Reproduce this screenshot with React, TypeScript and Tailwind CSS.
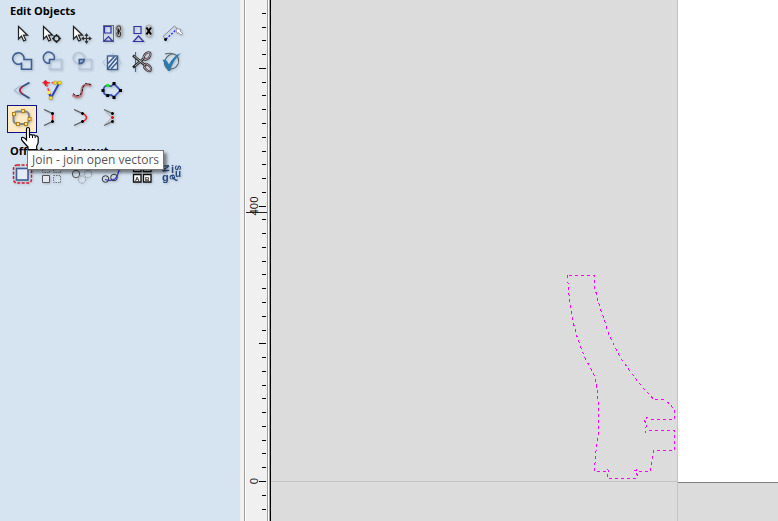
import type { ReactNode } from 'react';
import clsx from 'clsx';

type Tool = { label: string; icon: ReactNode; active?: boolean; newRow?: boolean };

const NAVY = '#3f5f93';
const arrow = 'v12.5l3-3 2.2 5 2-1-2.2-4.8h4z';

const CursorArrow = ({ x }: { x: number }) => (
  <path d={`M${x} 5.5${arrow}`} fill="#fff" stroke="#222" strokeWidth="1.2" />
);

// small square nodes used by the vector icons
const Nodes = ({ at, fill, size = 3 }: { at: number[][]; fill: string; size?: number }) => (
  <>
    {at.map(([x, y]) => (
      <rect key={`${x}-${y}`} x={x - size / 2} y={y - size / 2} width={size} height={size} fill={fill} />
    ))}
  </>
);

const Plus = ({ x, y, color = '#000' }: { x: number; y: number; color?: string }) => (
  <path d={`M${x - 1.5} ${y}h3M${x} ${y - 1.5}v3`} stroke={color} strokeWidth="1.5" />
);

const editTools: Tool[] = [
  { label: 'Select', icon: <CursorArrow x={11.5} /> },
  {
    label: 'Node edit',
    icon: (
      <>
        <CursorArrow x={6.5} />
        <circle cx="19.5" cy="17.5" r="2.7" stroke="#222" strokeWidth="1.5" />
        <path d="M19.5 13v2M19.5 20v2M15 17.5h2M22 17.5h2" stroke="#222" strokeWidth="1.5" />
      </>
    ),
  },
  {
    label: 'Transform',
    icon: (
      <>
        <CursorArrow x={6.5} />
        <path
          d="M19.5 13.5v8M15.5 17.5h8M18 15l1.5-2 1.5 2M18 20l1.5 2 1.5-2M17 16l-2 1.5 2 1.5M22 16l2 1.5-2 1.5"
          stroke="#333"
          strokeWidth="1.1"
        />
      </>
    ),
  },
  {
    label: 'Group',
    icon: (
      <>
        <path d="M6.5 4.5h10v16h-10z" stroke="#000" strokeDasharray="1 1" />
        <path d="M7.5 5.5h6.5v6.5h-6.5zM7 20h8.5l-4-4.5z" stroke="#3232a5" strokeWidth="1.2" />
        <rect x="18.5" y="4" width="6.5" height="12.5" rx="3" fill="#bbb" stroke="#aaa" />
        <rect x="20" y="5" width="3.5" height="5" rx="1.5" stroke="#333" />
        <rect x="20" y="10.5" width="3.5" height="5" rx="1.5" stroke="#333" />
        <path d="M21.7 7.5v6" stroke="#000" />
      </>
    ),
  },
  {
    label: 'Ungroup',
    icon: (
      <>
        <path d="M7 5.5h7v7h-7zM6.5 20.5h10l-5-5.5z" stroke="#3232a5" strokeWidth="1.2" />
        <rect x="18.5" y="4" width="6.5" height="12" rx="3" fill="#c8c8c8" stroke="#aaa" />
        <path d="M19.5 6.5l4.5 7M24 6.5l-4.5 7" stroke="#000" strokeWidth="2" />
      </>
    ),
  },
  {
    label: 'Measure',
    icon: (
      <>
        <path d="M6 15.5L17.5 5M6 15.5l3 3M17.5 5l3 3" stroke="#888" />
        <path d="M9 18L20 8" stroke="#22f" strokeWidth="1.3" strokeDasharray="2 1.5" />
        <Plus x={8.5} y={18.5} />
        <path d="M19 7.5l5 1-1 1.5 2.5 2.5-1.5 1.5-2.5-2.5-1.5 1z" fill="#fff" stroke="#888" strokeWidth=".8" />
      </>
    ),
  },
  {
    label: 'Weld vectors',
    icon: <path d="M14.5 14.3A5.7 5.7 0 1 1 17 10.5h7.5v9.7h-10z" stroke={NAVY} strokeWidth="1.6" />,
  },
  {
    label: 'Subtract vectors',
    icon: (
      <>
        <path d="M12.5 10.5h12v9.7h-12z" stroke="#b4c4da" strokeWidth="1.5" />
        <path d="M12.5 14.3A5.6 5.6 0 1 1 17.2 10.5h-4.7z" stroke={NAVY} strokeWidth="1.5" />
      </>
    ),
  },
  {
    label: 'Intersect vectors',
    icon: (
      <>
        <path d="M12 10.5h12.5v9.7H12z" stroke="#b4c4da" strokeWidth="1.3" />
        <circle cx="11.7" cy="9" r="5.6" stroke="#b4c4da" strokeWidth="1.3" />
        <path d="M12.3 10.5h5q-.8 4-5 4.3z" stroke={NAVY} strokeWidth="1.5" fill="#9db2d0" />
      </>
    ),
  },
  {
    label: 'Trim overlaps',
    icon: (
      <>
        <path d="M5.5 13.5l9.5-9.5 9.5 9.5-9.5 9.5z" stroke="#a9bdd8" strokeDasharray="3 1.5" />
        <rect x="10.5" y="7" width="10" height="13.5" fill="#e5edf7" stroke={NAVY} strokeWidth="1.4" />
        <path d="M11 14.5L17.5 7.5M11 19.5l9-11M14 20l6.5-7" stroke={NAVY} strokeWidth="1.7" />
      </>
    ),
  },
  {
    label: 'Interactive trim',
    icon: (
      <>
        <path d="M8.5 3v20" stroke="#3c6b9c" strokeWidth="1.1" />
        <path d="M6 6.5L19 17M6 18.5L18 8.5" stroke="#222" strokeWidth="2.6" />
        <path d="M7 7l11 9M8 17l9-8" stroke="#ddd" strokeWidth=".8" />
        <ellipse cx="20" cy="7" rx="4.3" ry="2.6" transform="rotate(-50 20 7)" stroke="#332b2f" strokeWidth="2.2" />
        <ellipse cx="20.5" cy="18.5" rx="4.3" ry="2.6" transform="rotate(45 20.5 18.5)" stroke="#332b2f" strokeWidth="2.2" />
        <ellipse cx="20" cy="7" rx="4.3" ry="2.6" transform="rotate(-50 20 7)" stroke="#d6b6bf" strokeWidth=".8" />
        <ellipse cx="20.5" cy="18.5" rx="4.3" ry="2.6" transform="rotate(45 20.5 18.5)" stroke="#d6b6bf" strokeWidth=".8" />
      </>
    ),
  },
  {
    label: 'Vector validator',
    icon: (
      <>
        <path d="M8 5q6-2 11 1 4 4 2 9-3 6-10 5-5-3-3-9 3-6 8-6" stroke="#566" strokeWidth="1.1" />
        <path d="M5.5 10.5l4 1 2.5 4Q16 7 24 4q-8 7-11 18h-2z" fill="#2b79ad" />
      </>
    ),
  },
  {
    label: 'Fillet',
    icon: (
      <>
        <path d="M13.5 8.5L7 13.3l6.5 4.7" stroke="#93add0" />
        <path d="M22.5 5.5L15 9.8q-4.5 3.5 0 7l7.5 4.5" stroke="#34507f" strokeWidth="1.7" />
        <path d="M15.5 9.5q-5 3.8 0 7.5" stroke="#b52b43" strokeWidth="1.6" />
      </>
    ),
  },
  {
    label: 'Extend',
    icon: (
      <>
        <path d="M9 5.7h12M9 6l5 14" stroke="#f44" strokeWidth="1.6" strokeDasharray="4 1.5" />
        <path d="M22 6.5L14 21l-2-5" stroke="#2845ad" strokeWidth="2" />
        <Nodes at={[[8.5, 5.7]]} fill="#e51f2b" size={3.5} />
        <path d="M8.5 3v6M5.5 5.7h6" stroke="#e51f2b" strokeWidth="1.2" />
        <Nodes at={[[18, 5.7], [22.5, 5.7], [11.7, 15.5], [13.7, 21]]} fill="#ffed27" />
        <path d="M16.8 4.2h2.5v3h-2.5zM21 4.2h3v3h-3zM12.2 19.5h3v3h-3z" stroke="#a98d27" strokeWidth=".6" />
      </>
    ),
  },
  {
    label: 'Fit curves',
    icon: (
      <>
        <path d="M5.7 17.5q2 3 6 2.5 3-1 3-5.5 0-6 4-6.5 3-1 5.5 1" stroke="#c77b83" strokeWidth="2.6" />
        <path d="M6 16.5l3 2.5 4-1 2-3 1-5 2.5-3.5 5.5 1" stroke="#171717" strokeDasharray="3 1" />
      </>
    ),
  },
  {
    label: 'Curve contour',
    icon: (
      <>
        <path d="M6.5 13.5q0-5 4.5-5l3 .8 3-2.5 6.5 6.5L17 20l-3-2-3.5 .5q-4-1-4-5z" stroke="#3651b5" strokeWidth="1.7" />
        <Nodes at={[[17, 6.5], [23.5, 13.5], [17, 20.5], [10.7, 18.5], [6, 13.5]]} fill="#000" />
        <Nodes at={[[10.7, 8.5]]} fill="#25e421" />
      </>
    ),
  },
  {
    label: 'Join',
    active: true,
    newRow: true,
    icon: (
      <>
        <rect x="6.5" y="6.5" width="15.5" height="12.5" rx="4" stroke="#7c8791" strokeWidth="2" />
        {[[7, 9], [16, 6], [22.5, 14], [19, 19], [11, 19]].map(([x, y]) => (
          <rect key={x} x={x - 1.5} y={y - 1.5} width="3" height="3" fill="#ffe27a" stroke="#b68120" />
        ))}
      </>
    ),
  },
  {
    label: 'Close with line',
    icon: (
      <>
        <path d="M7 4.5l8.5 4M15.5 16.5l-8.5 4" stroke="#555" strokeWidth="1.2" />
        <path d="M15.5 9v7" stroke="#f01a1a" strokeWidth="1.4" />
        <Plus x={15.5} y={8.5} />
        <Plus x={15.5} y={16.5} />
      </>
    ),
  },
  {
    label: 'Close with curve',
    icon: (
      <>
        <path d="M7 4.5l8.5 4M15.5 16.5l-8.5 4" stroke="#555" strokeWidth="1.2" />
        <path d="M16 8.5q7 4 0 8" stroke="#f01a1a" strokeWidth="1.4" />
        <Plus x={15.5} y={8.5} />
        <Plus x={15.5} y={16.5} />
      </>
    ),
  },
  {
    label: 'Close by moving ends',
    icon: (
      <>
        <path d="M8 5.5l7.5 7-7.5 7" stroke="#b9bcc0" strokeWidth="1.2" />
        <path d="M7 4.5l8.5 4M15.5 16.5l-8.5 4" stroke="#666" strokeWidth="1.2" />
        <Plus x={15.5} y={8.5} />
        <Plus x={15.5} y={12.5} color="#d8121c" />
        <Plus x={15.5} y={16.5} />
      </>
    ),
  },
];

const layoutTools: Tool[] = [
  {
    label: 'Offset',
    icon: (
      <>
        <rect x="6.5" y="4" width="18" height="18" rx="3.5" stroke="#d01c2b" strokeWidth="1.5" strokeDasharray="3 1.5" />
        <rect x="9.5" y="7.5" width="11.5" height="11.5" fill="#e3ebf4" stroke={NAVY} strokeWidth="1.6" />
      </>
    ),
  },
  {
    label: 'Array copy',
    icon: (
      <>
        <path d="M5.5 4.5h7v7h-7zM16.5 4.5h7v7h-7zM16.5 14.5h7v7h-7z" stroke="#777" strokeDasharray="1.5 1" />
        <path d="M5.5 14.5h7v7h-7z" stroke="#555" fill="#e5e9ef" />
      </>
    ),
  },
  {
    label: 'Circular copy',
    icon: (
      <>
        <circle cx="9" cy="13" r="3.7" stroke="#555" />
        <circle cx="15" cy="18.5" r="3.7" stroke="#888" strokeDasharray="1.5 1" />
        <circle cx="21" cy="13" r="3.7" stroke="#888" strokeDasharray="1.5 1" />
      </>
    ),
  },
  {
    label: 'Copy along vectors',
    icon: (
      <>
        <path d="M8 18.5q10 3 12.5-4.5 1-4 3.5-9" stroke="#3d3de0" strokeWidth="1.3" />
        <circle cx="8.5" cy="18" r="3.3" stroke="#333" />
        <circle cx="17" cy="16.5" r="3.3" stroke="#333" />
      </>
    ),
  },
  {
    label: 'Plate layout',
    icon: (
      <>
        <path
          d="M6.5 3.5h7.5v7h-7.5zM16.5 3.5h7.5v7h-7.5zM6.5 13.5h7.5v7.5h-7.5zM16.5 13.5h7.5v7.5h-7.5z"
          fill="#fff"
          stroke="#111"
          strokeWidth="1.3"
        />
        <g className="font-['Liberation_Sans'] text-[6px] font-bold" fill="#111" textAnchor="middle">
          <text x="10.25" y="19.5">A</text>
          <text x="20.25" y="19.5">B</text>
        </g>
      </>
    ),
  },
  {
    label: 'Nest parts',
    icon: (
      <g className="font-['Liberation_Sans'] text-[11px] font-bold" fill="#27477f">
        <text transform="translate(5 4) rotate(85)" className="text-[10px]">N</text>
        <text x="5" y="20">g</text>
        <text transform="translate(12 14) rotate(75)" className="text-[10px]">e</text>
        <text x="14" y="12">i</text>
        <text transform="translate(18 4) rotate(90)" className="text-[10px]">s</text>
        <text x="18" y="16" className="text-[10px]">u</text>
        <text transform="translate(19 21) rotate(-50)" className="text-[9px]">t</text>
      </g>
    ),
  },
];

function ToolSection({ title, tools }: { title: string; tools: Tool[] }) {
  return (
    <section>
      <h2 className="h-5 pl-[10px] text-[11px] leading-5 font-bold text-black">{title}</h2>
      <div className="grid grid-cols-[repeat(6,30px)] pl-[7px]">
        {tools.map((tool) => (
          <button
            key={tool.label}
            type="button"
            aria-label={tool.label}
            className={clsx(
              'h-7',
              tool.newRow && 'col-start-1',
              tool.active && 'bg-[#feebc5] outline-1 -outline-offset-1 outline-[#10108c]'
            )}
          >
            <svg viewBox="0 0 30 28" fill="none" className="h-7 w-[30px] drop-shadow-[1px_1px_1px_rgba(0,0,0,0.2)]">
              {tool.icon}
            </svg>
          </button>
        ))}
      </div>
    </section>
  );
}

const ORIGIN_Y = 481;
const ticks = Array.from({ length: 38 }, (_, i) => i - 2);

function Ruler() {
  return (
    <div className="w-[31px] shrink-0 overflow-hidden border-r border-black bg-[#f0f0f0] pl-1">
      <div className="h-full border-r border-l border-[#a0a0a0]">
        <div className="h-full border-r border-l border-white">
          <div className="h-full border-r border-[#a0a0a0]">
            <svg width="21" height="521" shapeRendering="crispEdges">
              {ticks.map((n) => {
                const long = n % 10 === 0;
                return (
                  <rect
                    key={n}
                    x={long ? 13 : 16}
                    y={Math.round(ORIGIN_Y - n * 13.77)}
                    width={long ? 7 : 4}
                    height="1"
                    fill="#000"
                  />
                );
              })}
              <rect x="0" y="212" width="21" height="1" fill="#222" />
              <g className="font-['Open_Sans'] text-[11px]" fill="#111" textAnchor="middle">
                <text transform="translate(12 206) rotate(-90)">400</text>
                <text transform="translate(12 481) rotate(-90)">0</text>
              </g>
            </svg>
          </div>
        </div>
      </div>
    </div>
  );
}

const outline =
  'M567.5 275.5L568.5 290 569.5 300 571.5 311 573.5 323.5 576.5 335 580.5 346.5 585.5 359 592.5 371.5 595.5 378 ' +
  '597.5 394 598.5 403V435L596.5 447.5 595.5 455 594.5 471.5H605.5L607.5 469 609.5 472.5 607.5 475V478.5' +
  'H636.5L637.5 475 634.5 471 637.5 469.5 639.5 471.5H650.5L653.5 450.5H674.5V430.5H649.5L645.5 432.5' +
  ' 644.5 429 646.5 426.5V423.5L643.5 419.5 647.5 417.5 649.5 419.5H674.5V410L670.5 405 664.5 399.5' +
  'H653.5L649.5 394.5 644.5 389.5 637.5 381 629.5 370.5 620.5 357.5 614.5 346 608.5 333.5 603.5 317.5' +
  ' 600.5 310 597.5 298.5 594.5 286.5V275.5Z';

function Workspace() {
  return (
    <main className="flex min-w-0 flex-1 flex-col overflow-hidden bg-[#dcdcdc]">
      <div className="flex h-[482px] shrink-0">
        <div className="w-[407px] shrink-0 border-r border-b border-[#c4c4c4]">
          <svg viewBox="271 0 406 481" width="406" height="481" fill="none" shapeRendering="crispEdges">
            <path d={outline} stroke="#ff00ff" strokeDasharray="3 3" />
          </svg>
        </div>
        <div className="flex-1 bg-white" />
      </div>
      <div className="flex flex-1">
        <div className="w-[407px] shrink-0 border-r border-[#c4c4c4]" />
        <div className="flex-1 border-t border-[#808080]" />
      </div>
    </main>
  );
}

export default function App() {
  return (
    <div className="flex h-screen overflow-hidden bg-[#dcdcdc] font-['Open_Sans',sans-serif]">
      <aside className="relative flex w-[240px] shrink-0 flex-col gap-2 bg-[#d6e4f2] pt-px">
        <ToolSection title="Edit Objects" tools={editTools} />
        <ToolSection title="Offset and Layout" tools={layoutTools} />

        <div
          role="tooltip"
          className="absolute top-[150px] left-[27px] h-5 border border-[#767676] bg-white px-1 text-[12px] leading-[18px] whitespace-nowrap text-[#575757] shadow-[3px_3px_3px_rgba(0,0,0,0.45)]"
        >
          Join - join open vectors
        </div>
        <svg viewBox="0 0 18 24" fill="none" className="absolute top-[126px] left-[21px] h-6 w-[18px]">
          <path
            d="M5.5 14V3q0-1.500 1.5-1.500T8.500 3v6q1.500-1 3 .3 1.800-1 2.700 .7 2.500-.5 3 1.500V16q0 2-1.500 4v3.500H7V21l-5.500-6q-2-2.500-.5-3.500 2-.5 4.500 2.500z"
            fill="#fff"
            stroke="#000"
            strokeWidth="1.2"
          />
          <path d="M8.5 9v3M11.5 9.5V12M14.2 10.5V12" stroke="#000" />
        </svg>
      </aside>
      <Ruler />
      <Workspace />
    </div>
  );
}
